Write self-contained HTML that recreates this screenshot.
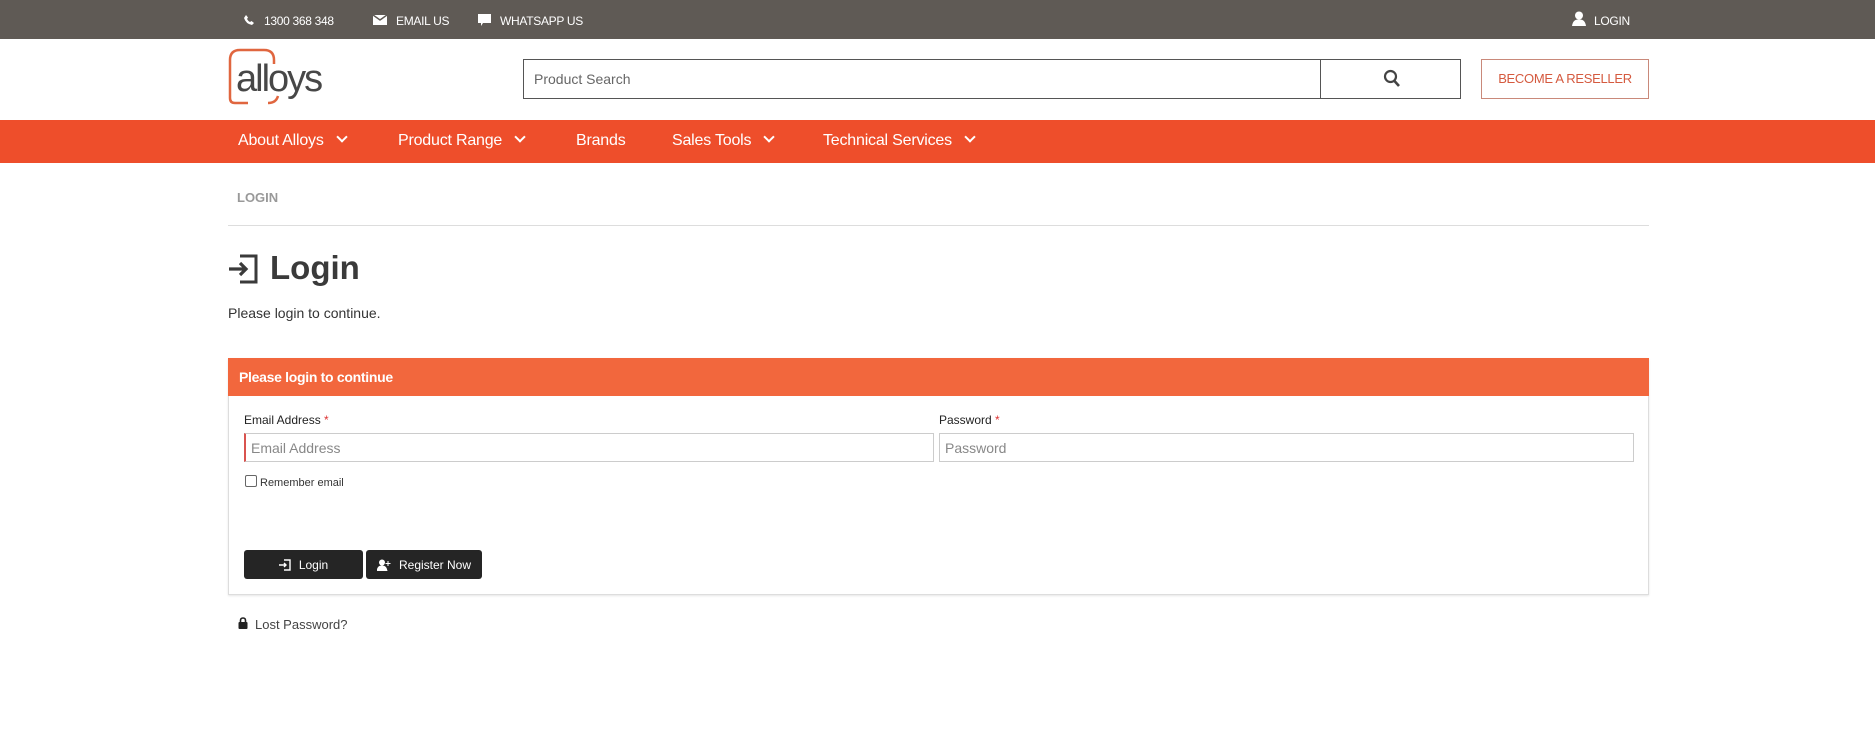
<!DOCTYPE html>
<html><head><meta charset="utf-8"><style>
*{box-sizing:border-box;margin:0;padding:0}
body{width:1875px;height:743px;background:#fff;font-family:"Liberation Sans",sans-serif;position:relative;overflow:hidden;color:#333}
.a{position:absolute}
.top{left:0;top:0;width:1875px;height:39px;background:#5f5a55}
.tt{color:#fff;font-size:12px;top:14px;letter-spacing:-0.3px}
.nav{left:0;top:120px;width:1875px;height:43px;background:#ee4e2b}
.ni{color:#fff;font-size:16px;top:132px;letter-spacing:-0.2px}
.chev{display:inline-block;width:8px;height:8px;border-right:2.5px solid #fff;border-bottom:2.5px solid #fff;transform:rotate(45deg);margin-left:14px;position:relative;top:-4px}
.inp{border:1px solid #ccc;height:29px;font-size:14px;color:#888;padding:6px 5px}
.btn{background:#252525;border-radius:3px;color:#fff;font-size:12px;height:29px;top:550px;display:flex;align-items:center;justify-content:center;gap:8px}
</style></head><body>
<div class="a top"></div>
<svg class="a" style="left:243px;top:14px" width="12" height="12" viewBox="0 0 12 12"><path d="M1 4 Q3 10 9 11 L11 9 L8.5 7 L7 8 Q5 7 4 5 L5 3.5 L3 1 Z" fill="#fff"/></svg>
<div class="a tt" style="left:264px">1300 368 348</div>
<svg class="a" style="left:373px;top:15px" width="14" height="10"><rect width="14" height="10" fill="#fff"/><path d="M0 0 L7 5 L14 0" stroke="#5f5a55" stroke-width="1.5" fill="none"/></svg>
<div class="a tt" style="left:396px">EMAIL US</div>
<svg class="a" style="left:478px;top:14px" width="13" height="13"><path d="M0 0 H13 V9 H5 L3 12 V9 H0 Z" fill="#fff"/></svg>
<div class="a tt" style="left:500px">WHATSAPP US</div>
<svg class="a" style="left:1572px;top:11px" width="14" height="15"><circle cx="7" cy="4.5" r="4" fill="#fff"/><path d="M0 15 Q1 8 7 8.5 Q13 8 14 15 Z" fill="#fff"/></svg>
<div class="a tt" style="left:1594px">LOGIN</div>

<svg class="a" style="left:228px;top:48px" width="110" height="58"><path d="M20 55 H7 Q2 55 2 50 V12 Q2 2 12 2 H36 Q46 2 46 12 V16" stroke="#e0663f" stroke-width="2.5" fill="none"/><path d="M40 55 Q48 55 50 48" stroke="#e0663f" stroke-width="2.5" fill="none"/><text x="8" y="43" font-family="Liberation Sans" font-size="38" fill="#474747" letter-spacing="-2">alloys</text></svg>

<div class="a inp" style="left:523px;top:59px;width:798px;height:40px;border-color:#555;padding:11px 10px;font-size:14px;color:#666">Product Search</div>
<div class="a" style="left:1320px;top:59px;width:141px;height:40px;border:1px solid #555"></div>
<svg class="a" style="left:1383px;top:69px" width="18" height="19"><circle cx="7.5" cy="7.5" r="5.5" stroke="#444" stroke-width="2.2" fill="none"/><path d="M11.5 12 L16 17" stroke="#444" stroke-width="2.6"/></svg>
<div class="a" style="left:1481px;top:59px;width:168px;height:40px;border:1px solid #c9897a;color:#d55a3f;font-size:13px;text-align:center;line-height:38px;letter-spacing:-0.3px">BECOME A RESELLER</div>

<div class="a nav"></div>
<div class="a ni" style="left:238px">About Alloys<span class="chev"></span></div>
<div class="a ni" style="left:398px">Product Range<span class="chev"></span></div>
<div class="a ni" style="left:576px">Brands</div>
<div class="a ni" style="left:672px">Sales Tools<span class="chev"></span></div>
<div class="a ni" style="left:823px">Technical Services<span class="chev"></span></div>

<div class="a" style="left:237px;top:190px;font-size:13px;color:#999;font-weight:bold">LOGIN</div>
<div class="a" style="left:228px;top:225px;width:1421px;height:1px;background:#ddd"></div>

<svg class="a" style="left:228px;top:254px" width="32" height="30"><path d="M12 2 H28 V28 H12" stroke="#3a3a3a" stroke-width="3" fill="none"/><path d="M1 15 H18 M12 9 L18 15 L12 21" stroke="#3a3a3a" stroke-width="3.2" fill="none"/></svg>
<div class="a" style="left:270px;top:249px;font-size:33px;font-weight:bold;color:#3a3a3a">Login</div>
<div class="a" style="left:228px;top:305px;font-size:14px;color:#333">Please login to continue.</div>

<div class="a" style="left:228px;top:358px;width:1421px;height:237px;border:1px solid #ddd;box-shadow:0 1px 2px rgba(0,0,0,.1)"></div>
<div class="a" style="left:228px;top:358px;width:1421px;height:38px;background:#f2673d"></div>
<div class="a" style="left:239px;top:369px;color:#fff;font-weight:bold;font-size:14px;letter-spacing:-0.3px">Please login to continue</div>
<div class="a" style="left:244px;top:413px;font-size:12px;color:#222">Email Address <span style="color:#d33">*</span></div>
<div class="a" style="left:939px;top:413px;font-size:12px;color:#222">Password <span style="color:#d33">*</span></div>
<div class="a inp" style="left:244px;top:433px;width:690px;border-left:2px solid #d9534f">Email Address</div>
<div class="a inp" style="left:939px;top:433px;width:695px">Password</div>
<div class="a" style="left:245px;top:475px;width:12px;height:12px;border:1px solid #666;border-radius:2px"></div>
<div class="a" style="left:260px;top:477px;font-size:11px;color:#333">Remember email</div>

<div class="a btn" style="left:244px;width:119px"><svg width="12" height="12"><path d="M5 1 H11 V11 H5" stroke="#fff" stroke-width="1.4" fill="none"/><path d="M0 6 H7 M5 4 L7 6 L5 8" stroke="#fff" stroke-width="1.4" fill="none"/></svg>Login</div>
<div class="a btn" style="left:366px;width:116px"><svg width="14" height="12"><circle cx="5" cy="3.5" r="3" fill="#fff"/><path d="M0 12 Q1 6.5 5 7 Q9 6.5 10 12Z M11 2 V7 M8.5 4.5 H13.5" fill="#fff" stroke="#fff" stroke-width="1"/></svg>Register Now</div>

<svg class="a" style="left:238px;top:617px" width="10" height="12"><path d="M2.5 5 V3.5 Q2.5 1 5 1 Q7.5 1 7.5 3.5 V5" stroke="#222" stroke-width="1.6" fill="none"/><rect x="0.5" y="5" width="9" height="7" rx="1" fill="#222"/></svg>
<div class="a" style="left:255px;top:617px;font-size:13px;color:#444">Lost Password?</div>
</body></html>
